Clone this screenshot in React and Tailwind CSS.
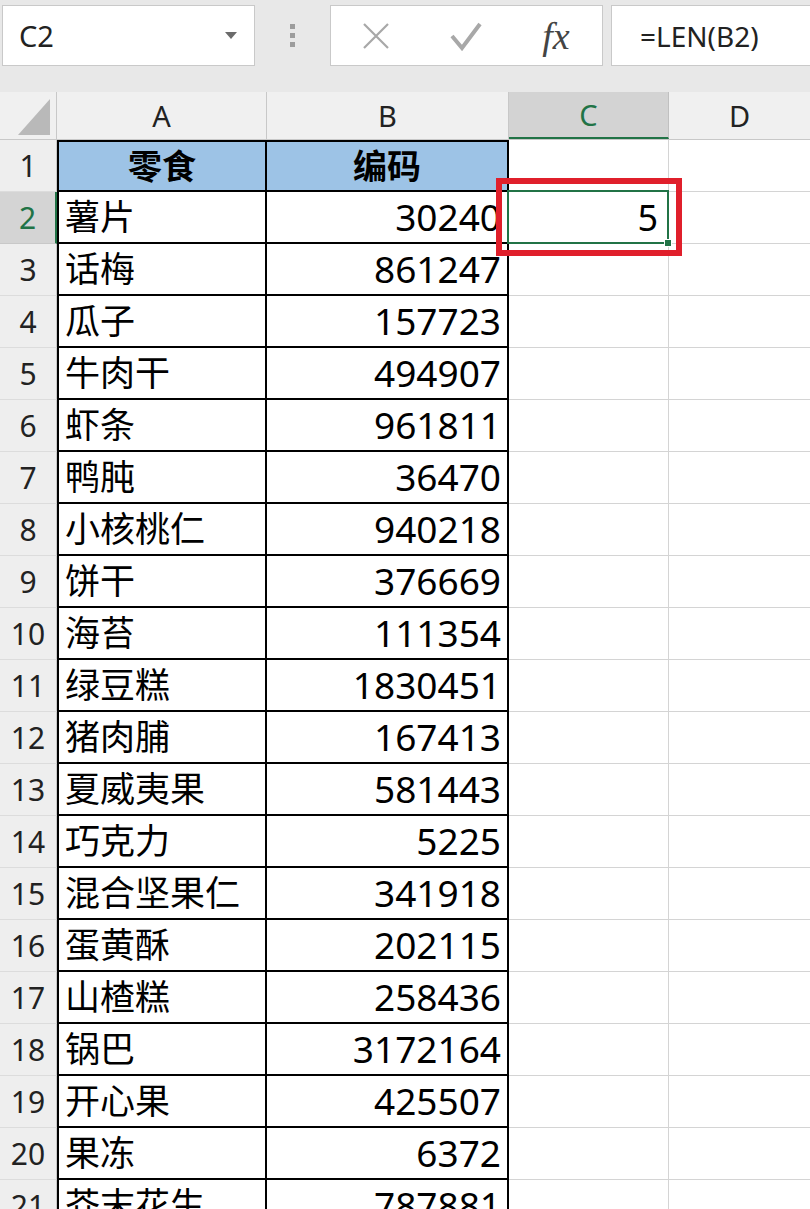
import React from 'react';

const rows = [
  ['薯片', '30240'],
  ['话梅', '861247'],
  ['瓜子', '157723'],
  ['牛肉干', '494907'],
  ['虾条', '961811'],
  ['鸭肫', '36470'],
  ['小核桃仁', '940218'],
  ['饼干', '376669'],
  ['海苔', '111354'],
  ['绿豆糕', '1830451'],
  ['猪肉脯', '167413'],
  ['夏威夷果', '581443'],
  ['巧克力', '5225'],
  ['混合坚果仁', '341918'],
  ['蛋黄酥', '202115'],
  ['山楂糕', '258436'],
  ['锅巴', '3172164'],
  ['开心果', '425507'],
  ['果冻', '6372'],
  ['芥末花生', '787881']
];

const font = { fontFamily: '"Noto Sans", "Noto Sans CJK SC", sans-serif' };

function RowHead({ n, active }) {
  return (
    <div
      className={
        active
          ? 'h-[52px] w-[57px] shrink-0 flex items-center justify-center bg-[#d4d4d4] border-b border-[#c8c8c8] border-r-2 border-r-[#217346] text-[30px] text-[#217346]'
          : 'h-[52px] w-[57px] shrink-0 flex items-center justify-center bg-[#eeeeee] border-b border-[#dcdcdc] border-r border-r-[#c8c8c8] text-[30px] text-[#222]'
      }
    >
      {n}
    </div>
  );
}

function EmptyCells() {
  return (
    <>
      <div className="h-[52px] w-[160px] shrink-0 border-r border-b border-[#d4d4d4] bg-white" />
      <div className="h-[52px] flex-1 border-b border-[#d4d4d4] bg-white" />
    </>
  );
}

export default function App() {
  return (
    <div className="w-[810px] h-[1209px] overflow-hidden bg-white" style={font}>
      {/* formula bar */}
      <div className="h-[92px] bg-[#e8e8e8] flex items-start pt-[5px]">
        <div className="ml-[2px] w-[253px] h-[61px] bg-white border border-[#c9c9c9] flex items-center justify-between pl-[16px] pr-[16px]">
          <span className="text-[29px] text-[#222]">C2</span>
          <svg width="14" height="9" viewBox="0 0 14 9">
            <path d="M1 1 L13 1 L7 8 Z" fill="#6b6b6b" />
          </svg>
        </div>
        <div className="w-[75px] h-[61px] flex flex-col items-center justify-center gap-[4px]">
          <div className="w-[5px] h-[5px] bg-[#9c9c9c]" />
          <div className="w-[5px] h-[5px] bg-[#9c9c9c]" />
          <div className="w-[5px] h-[5px] bg-[#9c9c9c]" />
        </div>
        <div className="w-[273px] h-[61px] bg-white border border-[#c9c9c9] flex items-center">
          <div className="w-[90px] flex justify-center">
            <svg width="30" height="30" viewBox="0 0 30 30">
              <path d="M3 3 L27 27 M27 3 L3 27" stroke="#a8a8a8" strokeWidth="2.2" fill="none" />
            </svg>
          </div>
          <div className="w-[90px] flex justify-center">
            <svg width="34" height="30" viewBox="0 0 34 30">
              <path d="M3 15 L13 27 L31 3" stroke="#a8a8a8" strokeWidth="4" fill="none" />
            </svg>
          </div>
          <div className="w-[90px] flex justify-center">
            <span
              className="text-[38px] leading-none italic text-[#444]"
              style={{ fontFamily: '"Liberation Serif", serif' }}
            >
              fx
            </span>
          </div>
        </div>
        <div className="ml-[8px] flex-1 h-[61px] bg-white border border-[#c9c9c9] border-r-0 flex items-center pl-[28px]">
          <span className="text-[28px] text-[#222]">=LEN(B2)</span>
        </div>
      </div>

      {/* column headers */}
      <div className="h-[48px] flex bg-[#f0f0f0] border-b border-[#c8c8c8]">
        <div className="w-[57px] shrink-0 flex items-end justify-end pr-[6px] pb-[4px] border-r border-[#c8c8c8]">
          <svg width="32" height="36" viewBox="0 0 32 36">
            <path d="M32 0 L32 36 L0 36 Z" fill="#b9b9b9" />
          </svg>
        </div>
        <div className="w-[210px] shrink-0 flex items-center justify-center border-r border-[#c8c8c8] text-[29px] text-[#222]">A</div>
        <div className="w-[242px] shrink-0 flex items-center justify-center border-r border-[#c8c8c8] text-[29px] text-[#222]">B</div>
        <div className="w-[160px] shrink-0 flex items-center justify-center bg-[#d3d3d3] border-r border-[#c0c0c0] border-b-2 border-b-[#217346] text-[29px] text-[#217346]">C</div>
        <div className="flex-1 flex items-center justify-center text-[29px] text-[#222]">D</div>
      </div>

      {/* row 1 */}
      <div className="flex">
        <RowHead n={1} />
        <div className="h-[52px] w-[210px] shrink-0 flex items-center justify-center bg-[#9dc3e6] border-2 border-black text-[34px] font-bold text-black">
          零食
        </div>
        <div className="h-[52px] w-[242px] shrink-0 flex items-center justify-center bg-[#9dc3e6] border-2 border-l-0 border-black text-[34px] font-bold text-black">
          编码
        </div>
        <EmptyCells />
      </div>

      {rows.map(([name, code], i) => {
        const n = i + 2;
        return (
          <div key={n} className="flex">
            <RowHead n={n} active={n === 2} />
            <div className="h-[52px] w-[210px] shrink-0 flex items-center pl-[6px] border-l-2 border-r-2 border-b-2 border-black text-[35px] text-black whitespace-nowrap overflow-hidden">
              {name}
            </div>
            <div className="h-[52px] w-[242px] shrink-0 flex items-center justify-end pr-[6px] border-r-2 border-b-2 border-black text-[37px] text-black whitespace-nowrap">
              {code}
            </div>
            {n === 2 ? (
              <>
                <div className="relative h-[52px] w-[160px] shrink-0 border-r border-b border-[#d4d4d4] bg-white flex items-center justify-end pr-[10px] text-[36px] text-black">
                  5
                  <div className="absolute -left-[2px] -top-[2px] -right-[1px] -bottom-[1px] border-2 border-[#217346]" />
                  <div className="absolute -right-[4px] -bottom-[4px] w-[8px] h-[8px] bg-[#217346] border border-white" />
                  <div className="absolute -left-[13px] -top-[14px] -right-[14px] -bottom-[13px] border-[6px] border-[#e01f2b]" />
                </div>
                <div className="h-[52px] flex-1 border-b border-[#d4d4d4] bg-white" />
              </>
            ) : (
              <EmptyCells />
            )}
          </div>
        );
      })}
    </div>
  );
}
